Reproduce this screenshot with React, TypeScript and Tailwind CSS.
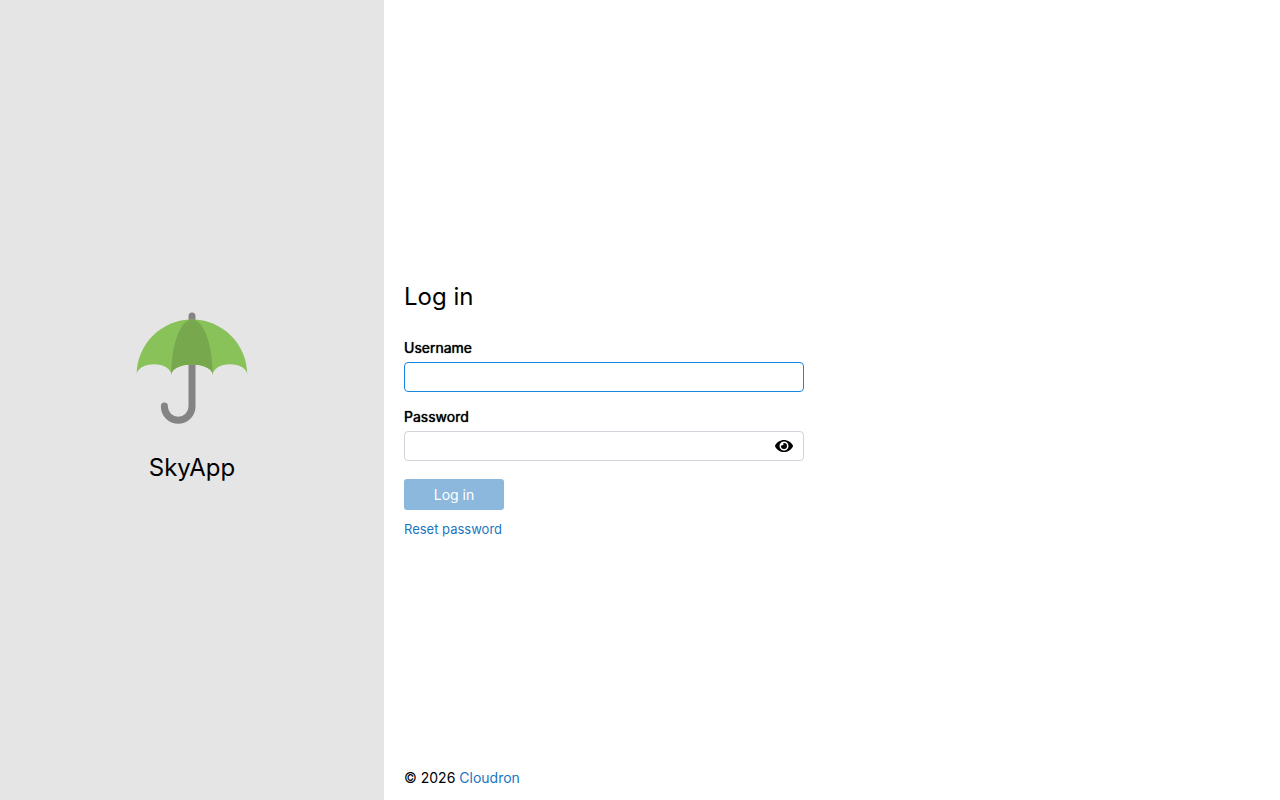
import React, { useState } from 'react';
import { FaEye, FaEyeSlash } from 'react-icons/fa';

const UmbrellaLogo: React.FC = () => (
    <svg viewBox="0 0 128 128" className="w-32 h-32" aria-hidden="true">
        {/* Shaft and hook */}
        <path
            d="M64 12 V102.4 A13.8 13.8 0 0 1 36.4 102.4 V102"
            fill="none"
            stroke="#848484"
            strokeWidth="7"
            strokeLinecap="round"
        />
        {/* Canopy */}
        <path
            d="M64 15.6 C94.5 15.6 119.3 40.2 119.3 71 C119.3 65 111.5 60.3 102 60.3 C92.5 60.3 84.8 65 84.8 71 C84.8 65 75.5 60.6 64 60.6 C52.5 60.6 43.3 65 43.3 71 C43.3 65 35.5 60.3 26 60.3 C16.5 60.3 8.7 65 8.7 71 C8.7 40.2 33.5 15.6 64 15.6 Z"
            fill="#8ac25a"
        />
        <path
            d="M64 15.6 C75.5 15.6 84.8 40.4 84.8 71 C84.8 65 75.5 60.6 64 60.6 C52.5 60.6 43.3 65 43.3 71 C43.3 40.4 52.5 15.6 64 15.6 Z"
            fill="#77a84e"
        />
    </svg>
);

const labelClass = 'mb-1 block leading-5 [text-shadow:0_0_1px_#000]';

const App: React.FC = () => {
    const [username, setUsername] = useState('');
    const [password, setPassword] = useState('');
    const [showPassword, setShowPassword] = useState(false);

    const canSubmit = username !== '' && password !== '';

    return (
        <div className="flex min-h-screen bg-white font-['Inter',sans-serif] text-sm text-black">
            <aside className="flex w-[30%] flex-col items-center justify-center bg-[#e5e5e5]">
                <UmbrellaLogo />
                <h1 className="mt-5 mb-3 text-2xl">SkyApp</h1>
            </aside>

            <div className="flex flex-1 flex-col px-5">
                <main className="flex flex-1 flex-col justify-center pt-[62px]">
                    <form className="w-full max-w-[400px]" onSubmit={(e) => e.preventDefault()}>
                        <h2 className="mb-[25px] text-2xl">Log in</h2>

                        <div className="mb-[15px]">
                            <label htmlFor="username" className={labelClass}>Username</label>
                            <input
                                id="username"
                                type="text"
                                value={username}
                                onChange={(e) => setUsername(e.target.value)}
                                className="block h-[30px] w-full rounded border border-[#1a88e0] px-2 outline-none"
                            />
                        </div>

                        <div className="mb-[18px]">
                            <label htmlFor="password" className={labelClass}>Password</label>
                            <div className="flex h-[30px] items-center rounded border border-[#cfd3da] pr-2.5">
                                <input
                                    id="password"
                                    type={showPassword ? 'text' : 'password'}
                                    value={password}
                                    onChange={(e) => setPassword(e.target.value)}
                                    className="h-full min-w-0 flex-1 px-2 outline-none"
                                />
                                <button type="button" aria-label="Toggle password" onClick={() => setShowPassword(!showPassword)}>
                                    {showPassword ? <FaEyeSlash className="h-4 w-[18px]" /> : <FaEye className="h-4 w-[18px]" />}
                                </button>
                            </div>
                        </div>

                        <button
                            type="submit"
                            disabled={!canSubmit}
                            className="mb-[11px] block h-[31px] w-[100px] rounded-[3px] bg-[#1a76bf] text-white disabled:bg-[#8cb8dd]"
                        >
                            Log in
                        </button>
                        <a href="#reset" className="block text-[13px] leading-4 text-[#1a76bf]">Reset password</a>
                    </form>
                </main>

                <footer className="py-3">
                    © 2026 <a href="#cloudron" className="text-[#1a76bf]">Cloudron</a>
                </footer>
            </div>
        </div>
    );
};

export default App;
